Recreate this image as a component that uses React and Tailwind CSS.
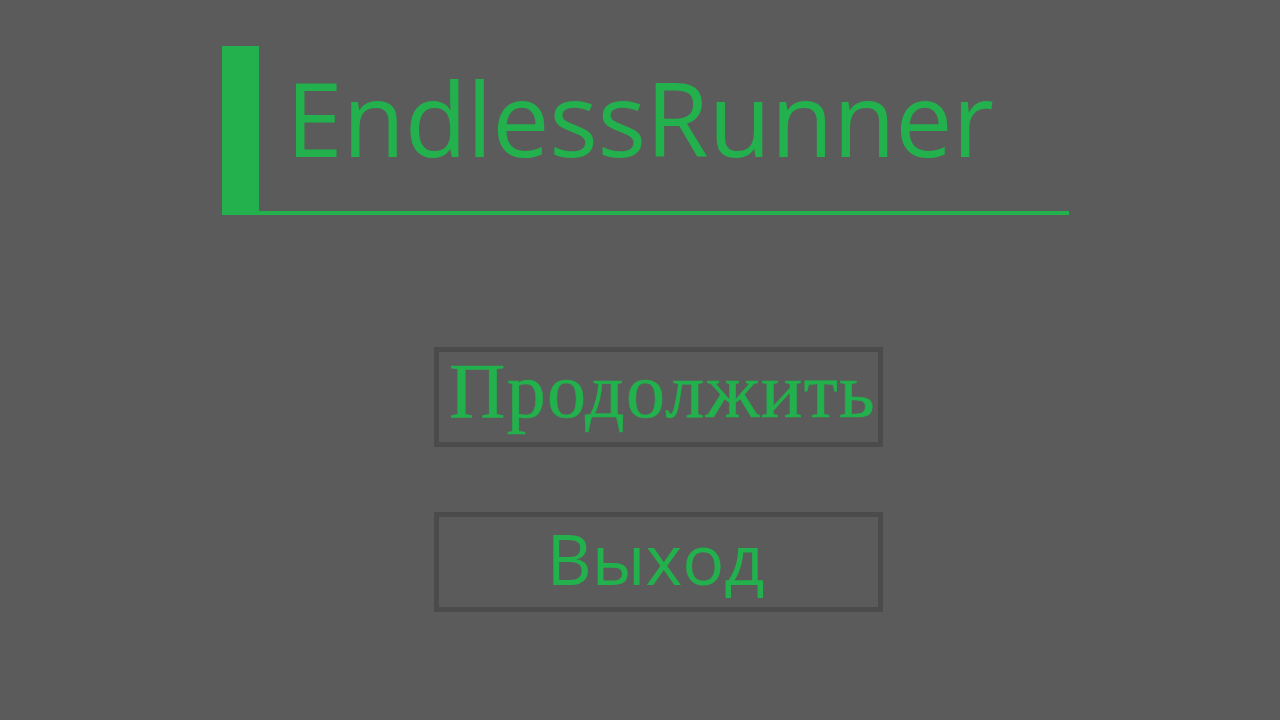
import React from 'react';

export default function App() {
    return (
        <div className="w-[1280px] h-[720px] bg-[#5b5b5b] overflow-hidden flex flex-col">
            {/* title */}
            <div className="mt-[46px] ml-[222px] w-[847px] h-[169px] flex">
                <div className="w-[37px] h-full bg-[#22b14c]"></div>
                <div className="flex-1 border-b-4 border-[#22b14c] flex items-start">
                    <h1 className="ml-[27px] mt-[6px] text-[102px] leading-[1.3] text-[#22b14c] font-['Open_Sans',sans-serif] tracking-[-0.3px]">
                        EndlessRunner
                    </h1>
                </div>
            </div>

            {/* menu */}
            <div className="ml-[434px] mt-[132px] w-[449px] flex flex-col gap-[65px]">
                <button className="h-[100px] border-[5px] border-[#4b4b4b] flex items-center justify-center text-[#22b14c] font-['Liberation_Serif',serif] text-[78px] leading-none tracking-[1.3px] pb-[12px] pl-[8px] [-webkit-text-stroke:0.6px_#22b14c]">
                    Продолжить
                </button>
                <button className="h-[100px] border-[5px] border-[#4b4b4b] flex items-center justify-center text-[#22b14c] font-['Open_Sans',sans-serif] text-[70px] leading-none pr-[6px] pb-[8px]">
                    Выход
                </button>
            </div>
        </div>
    );
}
